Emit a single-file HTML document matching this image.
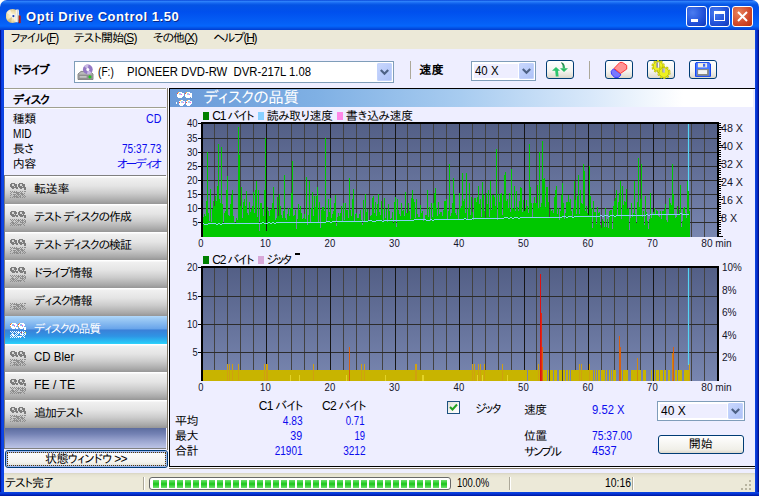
<!DOCTYPE html>
<html lang="ja"><head><meta charset="utf-8"><title>Opti Drive Control 1.50</title>
<style>
*{box-sizing:border-box;margin:0;padding:0}
html,body{width:759px;height:496px;overflow:hidden;background:#fff}
body{font-family:"Liberation Sans","IPAPGothic","IPAGothic",sans-serif;font-size:12px;color:#000;position:relative;line-height:1}
#win div,#win svg{position:absolute}
#win{position:absolute;left:0;top:0;width:759px;height:496px;overflow:hidden;background:#fff}
.bl{left:0;top:24px;width:4px;height:472px;background:linear-gradient(90deg,#00138c 0,#00138c 1px,#0831d9 1px,#0c46e6 2.5px,#0a40e0 4px)}
.br{left:755px;top:24px;width:4px;height:472px;background:linear-gradient(90deg,#0c48e4 0,#0835d2 1.5px,#0424b8 2.8px,#00138c 3px,#00138c 4px)}
.bb{left:0;top:492px;width:759px;height:4px;background:linear-gradient(180deg,#0a48e2 0,#0838d8 1.5px,#0024b8 3px,#00159a 4px)}
.t{white-space:nowrap;line-height:14px;height:14px}
.b{font-weight:bold}
.blue{color:#0c0cee}
#title{left:0;top:0;width:759px;height:30px;border-radius:7px 7px 0 0;
 background:linear-gradient(180deg,#0a48d8 0,#2c80fa 1.5px,#1668f0 3px,#0453e4 5px,#0050ee 12px,#0560f6 23px,#0566fc 26px,#0452e4 28px,#003cd0 30px)}
#menu{left:4px;top:30px;width:751px;height:19px;background:#ece9d8}
#body{left:4px;top:49px;width:751px;height:424px;background:#eeeeff}
#status{left:4px;top:473px;width:751px;height:19px;background:linear-gradient(180deg,#d8d4c2 0,#e6e3d2 2px,#ece9d8 5px,#ece9d8 100%)}
.combo{background:#fff;border:1px solid #7f9db9}
.dd{width:15px;height:18px;border-radius:2px;background:linear-gradient(135deg,#cad8fd,#b9cbfa 55%,#adc0f6);box-shadow:inset 0 0 0 1px #c2d2fc}
.tb{height:19px;width:28px;border:1px solid #003c74;border-radius:3px;background:linear-gradient(180deg,#fff 0%,#f4f3ee 60%,#dcd8cc 100%)}
.nb{left:4px;width:163px;height:28px;background:linear-gradient(180deg,#fff 0,#fff 1px,#f0f0f0 2px,#e4e4e4 36%,#cccccc 62%,#aaaaaa 88%,#969696 100%)}
.nb.sel{background:linear-gradient(180deg,#b4dafc 0,#a2cef6 2px,#68a4ea 46%,#3a80d8 50%,#2f94e4 72%,#28c4f6 94%,#30d4fc 100%)}
.nb .t{left:29px;top:6px;font-size:12px}
.nb.sel .t{color:#fff}
.ic{left:6px;top:7px;width:16px;height:15px}
</style></head><body>
<div id="win">
<div class="bl"></div><div class="br"></div><div class="bb"></div>
<div id="title">
 <svg style="left:6px;top:7.5px" width="16" height="16" viewBox="0 0 16 16"><defs><radialGradient id="cdg" cx="0.45" cy="0.5" r="0.55"><stop offset="0" stop-color="#fffbe8"></stop><stop offset="0.55" stop-color="#f2e4b4"></stop><stop offset="1" stop-color="#d8c488"></stop></radialGradient></defs><circle cx="6.6" cy="8" r="6.9" fill="url(#cdg)"></circle><path d="M6.6 8L0.4 5A6.9 6.9 0 0 1 4.2 1.5ZM6.6 8L12.8 11A6.9 6.9 0 0 1 9 14.5Z" fill="#fff" opacity="0.55"></path><path d="M6.6 8L1.2 12.4A6.9 6.9 0 0 0 5 14.7Z" fill="#c0a868" opacity="0.5"></path><circle cx="7.4" cy="8.1" r="2.1" fill="#f4f4f4"></circle><circle cx="7.4" cy="8.1" r="1.1" fill="#1840b0"></circle><path d="M9.6 2.4L10.4 1.6H12.4L13 2.6V4.2L12.6 14.2H9.9Z" fill="#f4f2ec"></path><path d="M11.8 1.8V14.2" stroke="#c8c4bc" stroke-width="0.8"></path><rect x="12.6" y="7.4" width="0.6" height="7.8" fill="#401010"></rect><rect x="13" y="7.6" width="1.7" height="7.5" fill="#b81818"></rect></svg>
 <div class="t b" style="left: 26px; top: 9.5px; font-size: 13px; color: rgb(255, 255, 255); letter-spacing: 0.54px; text-shadow: rgb(10, 42, 138) 1px 1px 0px; right: auto;">Opti Drive Control 1.50</div>
 <div style="left:686px;top:6px;width:21px;height:21px;border:1px solid #fff;border-radius:3px;background:radial-gradient(circle at 30% 30%,#4a7cf0,#2050d8 60%,#1038b8)"><div style="left:4px;top:12px;width:7px;height:3px;background:#fff"></div></div>
 <div style="left:709px;top:6px;width:21px;height:21px;border:1px solid #fff;border-radius:3px;background:radial-gradient(circle at 30% 30%,#4a7cf0,#2050d8 60%,#1038b8)"><div style="left:4px;top:4px;width:11px;height:10px;border:1px solid #fff;border-top-width:3px"></div></div>
 <div style="left:732px;top:6px;width:21px;height:21px;border:1px solid #fff;border-radius:3px;background:radial-gradient(circle at 30% 30%,#e8835c,#d0482a 60%,#b83010)"><svg style="left:0;top:0" width="19" height="19"><path d="M5 5L14 14M14 5L5 14" stroke="#fff" stroke-width="2"></path></svg></div>
</div>
<div id="menu">
 <div class="t" style="left: 6.7px; top: 1px; letter-spacing: -1.01px; right: auto;">ファイル(<u>F</u>)</div>
 <div class="t" style="left: 69.6px; top: 1px; letter-spacing: -0.92px; right: auto;">テスト開始(<u>S</u>)</div>
 <div class="t" style="left: 149px; top: 1px; letter-spacing: -1.04px; right: auto;">その他(<u>X</u>)</div>
 <div class="t" style="left: 209.4px; top: 1px; letter-spacing: -1.38px; right: auto;">ヘルプ(<u>H</u>)</div>
</div>
<div id="body">
 <!-- toolbar -->
 <div class="t b" style="left: 9px; top: 14px; letter-spacing: -0.71px; right: auto;">ドライブ</div>
 <div class="combo" style="left:70px;top:12px;width:320px;height:22px">
  <svg style="left:2px;top:1.5px" width="17" height="17" viewBox="0 0 17 17"><path d="M1 10L4 7.4H13L16 10V15.5H1Z" fill="#b8b8b8" stroke="#707070" stroke-width="0.8"></path><rect x="1.4" y="10.6" width="14.2" height="4.6" fill="#909090"></rect><rect x="2.6" y="12.2" width="7" height="1.4" fill="#d0d0d0"></rect><circle cx="10.8" cy="5.4" r="4.9" fill="#9478c4"></circle><path d="M10.8 5.4L7 2.3A4.9 4.9 0 0 1 11.6 0.6ZM10.8 5.4L14.6 8.5A4.9 4.9 0 0 1 10 10.2Z" fill="#c8b8e4"></path><circle cx="10.8" cy="5.4" r="1.5" fill="#fff"></circle><rect x="11.6" y="11.6" width="2.6" height="2.6" fill="#20c820" transform="rotate(45 12.9 12.9)"></rect></svg><div class="t" style="left: 22.5px; top: 3px; letter-spacing: 0px; right: auto; transform-origin: 0px 50%; transform: scaleX(0.847);">(F:)</div><div class="t" style="left: 51.5px; top: 3px; letter-spacing: 0px; right: auto; transform-origin: 0px 50%; transform: scaleX(0.942);">PIONEER DVD-RW&nbsp; DVR-217L 1.08</div>
  <div class="dd" style="right:1px;top:1px"><svg style="left:3px;top:6px" width="9" height="7"><path d="M0.8 1L4.5 4.7L8.2 1" stroke="#4d6185" stroke-width="2.2" fill="none"></path></svg></div>
 </div>
 <div style="left:406px;top:12px;width:1px;height:18px;background:#aca899"></div>
 <div class="t b" style="left: 415.3px; top: 14px; letter-spacing: 0.33px; right: auto;">速度</div>
 <div class="combo" style="left:467px;top:12px;width:65px;height:20px">
  <div style="left:2px;top:2px;width:44px;height:14px;background:#eeeeff"></div>
  <div class="t" style="left: 3px; top: 1.5px; letter-spacing: 0px; right: auto; transform-origin: 0px 50%; transform: scaleX(0.952);">40 X</div>
  <div class="dd" style="right:1px;top:1px;height:16px"><svg style="left:3px;top:5px" width="9" height="7"><path d="M0.8 1L4.5 4.7L8.2 1" stroke="#4d6185" stroke-width="2.2" fill="none"></path></svg></div>
 </div>
 <div class="tb" style="left:542px;top:11px"><svg style="left:-1px;top:-1px" width="28" height="19" viewBox="0 0 28 19"><defs><linearGradient id="ga" x1="0" y1="0" x2="0" y2="1"><stop offset="0" stop-color="#16703a"></stop><stop offset="1" stop-color="#38c070"></stop></linearGradient></defs><path d="M10 7L6 10.8H9.2L9.8 16.6H12.6L12 10.8H14Z" fill="#2cc46c"></path><path d="M14 8.2H22L18 11.9Z" fill="#2abc64"></path><path d="M14.8 2.3Q18.6 2.4 19.2 8.4H16.8Q16.8 4.2 14.8 2.3Z" fill="url(#ga)"></path></svg></div>
 <div style="left:585px;top:12px;width:1px;height:18px;background:#aca899"></div>
 <div class="tb" style="left:601px;top:11px"><svg style="left:-1px;top:-1px" width="28" height="19" viewBox="0 0 28 19"><path d="M8.4 8.9L6.2 11.3L6.5 14L9.6 17.4H13.5L15.7 15L15.4 13.5Z" fill="#7878ff" stroke="#3838ff" stroke-width="1"></path><path d="M9.1 8.4L14.9 2.4H17.4L21.7 5.3V9.1L15.4 13.5Z" fill="#ff9494" stroke="#ff3434" stroke-width="1"></path></svg></div>
 <div class="tb" style="left:643px;top:11px"><svg style="left:-1px;top:-1px" width="28" height="19" viewBox="0 0 28 19"><circle cx="11.1" cy="6.3" r="5.7" fill="none" stroke="#a8ac00" stroke-width="1.8" stroke-dasharray="2 1.58"></circle><circle cx="11.1" cy="6.3" r="5" fill="#eef020" stroke="#989c00" stroke-width="0.7"></circle><circle cx="11.1" cy="6.3" r="5.6" fill="none" stroke="#e4e818" stroke-width="1.2" stroke-dasharray="2 1.52" stroke-dashoffset="-0.2"></circle><circle cx="16.9" cy="12.5" r="5.7" fill="none" stroke="#a8ac00" stroke-width="1.8" stroke-dasharray="2 1.58"></circle><circle cx="16.9" cy="12.5" r="5" fill="#eef020" stroke="#989c00" stroke-width="0.7"></circle><circle cx="16.9" cy="12.5" r="5.6" fill="none" stroke="#e4e818" stroke-width="1.2" stroke-dasharray="2 1.52" stroke-dashoffset="-0.2"></circle><rect x="9.4" y="2.4" width="3.1" height="5.3" fill="#8c8ca8"></rect><rect x="10.9" y="2.4" width="1.1" height="5.3" fill="#f4f4f8"></rect><rect x="15.4" y="8.4" width="2.5" height="4.1" fill="#8c8ca8"></rect><rect x="16.6" y="8.4" width="0.9" height="4.1" fill="#f4f4f8"></rect></svg></div>
 <div class="tb" style="left:685px;top:11px"><svg style="left:-1px;top:-1px" width="28" height="19" viewBox="0 0 28 19"><path d="M7 2.6H20L21.5 4V16.4H6.5V3.1Z" fill="#4878ff" stroke="#1848f0" stroke-width="1"></path><rect x="8.9" y="3.1" width="9.2" height="4.3" fill="#f2eee2"></rect><rect x="14" y="3.8" width="2.2" height="2.9" fill="#3868f8"></rect><rect x="8.2" y="9.1" width="11.6" height="6.6" fill="#8a8a80"></rect><rect x="9.1" y="10.1" width="9" height="3.9" fill="#f4f4f4"></rect></svg></div>
 <!-- left panel -->
 <div style="left:0;top:39px;width:162px;height:1px;background:#a0a090"></div><div style="left:0;top:40px;width:162px;height:1px;background:#fcfcff"></div>
 <div style="left:0;top:58px;width:162px;height:1px;background:#a0a090"></div><div style="left:0;top:59px;width:162px;height:1px;background:#fcfcff"></div>
 
 <div class="t b" style="left: 9px; top: 44px; letter-spacing: -0.89px; right: auto;">ディスク</div>
 <div class="t" style="left: 8.7px; top: 63px; letter-spacing: -0.33px; right: auto;">種類</div>
 <div class="t" style="left: 9px; top: 78px; letter-spacing: 0px; right: auto; transform-origin: 0px 50%; transform: scaleX(0.841);">MID</div>
 <div class="t" style="left: 8.7px; top: 93px; letter-spacing: -0.7px; right: auto;">長さ</div>
 <div class="t" style="left: 8.7px; top: 108px; letter-spacing: -0.33px; right: auto;">内容</div>
 <div class="t blue" style="right: auto; top: 63px; letter-spacing: 0px; left: 141.7px; transform-origin: 0px 50%; transform: scaleX(0.882);">CD</div>
 <div class="t blue" style="right: auto; top: 93px; letter-spacing: 0px; left: 117.7px; transform-origin: 0px 50%; transform: scaleX(0.841);">75:37.73</div>
 <div class="t blue" style="right: auto; top: 108px; letter-spacing: -1.69px; left: 113px;">オーディオ</div>
</div>
<div style="left:4px;top:175px;width:162px;height:1px;background:#808080"></div><div style="left:4px;top:175px;width:1px;height:274px;background:#7c7c80;z-index:3"></div>
<div class="nb" style="top:176px"><svg class="ic" width="16" height="15" viewBox="0 0 16 15" shape-rendering="crispEdges"><path d="M1 0h4v1h-4zM9 0h4v1h-4zM0 1h7v1h-7zM8 1h7v1h-7zM0 2h7v1h-7zM8 2h7v1h-7zM0 3h7v1h-7zM8 3h7v1h-7zM1 4h5v1h-5zM9 4h5v1h-5zM2 5h2v1h-2zM10 5h2v1h-2zM6 4h2v2h-2zM14 4h2v3h-2z" fill="#7c7c7c"></path><path d="M2 1h2v2h-2zM10 1h2v2h-2zM4 3h1v1h-1zM12 3h1v1h-1z" fill="#d8d8d8"></path><path d="M0 8h1v1h-1zM2 8h1v1h-1zM4 8h1v1h-1zM6 8h1v1h-1zM10 8h1v1h-1zM12 8h1v1h-1zM14 8h1v1h-1zM15 8h1v1h-1zM1 9h1v1h-1zM3 9h1v1h-1zM4 9h1v1h-1zM5 9h1v1h-1zM6 9h1v1h-1zM7 9h1v1h-1zM8 9h1v1h-1zM9 9h1v1h-1zM11 9h1v1h-1zM0 10h1v1h-1zM6 10h1v1h-1zM7 10h1v1h-1zM8 10h1v1h-1zM10 10h1v1h-1zM11 10h1v1h-1zM12 10h1v1h-1zM14 10h1v1h-1zM1 11h1v1h-1zM3 11h1v1h-1zM4 11h1v1h-1zM5 11h1v1h-1zM7 11h1v1h-1zM8 11h1v1h-1zM9 11h1v1h-1zM11 11h1v1h-1zM12 11h1v1h-1zM13 11h1v1h-1zM0 12h1v1h-1zM4 12h1v1h-1zM6 12h1v1h-1zM8 12h1v1h-1zM10 12h1v1h-1zM12 12h1v1h-1zM14 12h1v1h-1zM3 13h1v1h-1zM4 13h1v1h-1zM5 13h1v1h-1zM6 13h1v1h-1zM7 13h1v1h-1zM9 13h1v1h-1zM10 13h1v1h-1zM13 13h1v1h-1zM15 13h1v1h-1zM0 14h1v1h-1zM2 14h1v1h-1zM4 14h1v1h-1zM6 14h1v1h-1zM7 14h1v1h-1zM8 14h1v1h-1zM10 14h1v1h-1zM12 14h1v1h-1zM14 14h1v1h-1z" fill="#8e8e8e"></path></svg><div class="t" style="letter-spacing: -0.28px; right: auto; left: 30px;">転送率</div></div>
<div class="nb" style="top:204px"><svg class="ic" width="16" height="15" viewBox="0 0 16 15" shape-rendering="crispEdges"><path d="M1 0h5v1h-5zM9 0h5v1h-5zM0 1h7v1h-7zM8 1h7v1h-7zM0 2h7v1h-7zM8 2h7v1h-7zM0 3h6v1h-6zM8 3h6v1h-6zM1 4h5v1h-5zM9 4h5v1h-5zM2 5h3v1h-3zM10 5h3v1h-3zM6 4h2v2h-2zM14 4h2v3h-2z" fill="#7c7c7c"></path><path d="M2 1h2v2h-2zM10 1h2v2h-2zM4 3h1v1h-1zM12 3h1v1h-1z" fill="#d8d8d8"></path><path d="M0 8h1v1h-1zM2 8h1v1h-1zM4 8h1v1h-1zM6 8h1v1h-1zM8 8h1v1h-1zM10 8h1v1h-1zM12 8h1v1h-1zM14 8h1v1h-1zM1 9h1v1h-1zM3 9h1v1h-1zM5 9h1v1h-1zM7 9h1v1h-1zM8 9h1v1h-1zM9 9h1v1h-1zM11 9h1v1h-1zM12 9h1v1h-1zM13 9h1v1h-1zM15 9h1v1h-1zM2 10h1v1h-1zM6 10h1v1h-1zM8 10h1v1h-1zM10 10h1v1h-1zM12 10h1v1h-1zM14 10h1v1h-1zM15 10h1v1h-1zM1 11h1v1h-1zM2 11h1v1h-1zM3 11h1v1h-1zM5 11h1v1h-1zM7 11h1v1h-1zM10 11h1v1h-1zM11 11h1v1h-1zM12 11h1v1h-1zM13 11h1v1h-1zM15 11h1v1h-1zM0 12h1v1h-1zM2 12h1v1h-1zM3 12h1v1h-1zM4 12h1v1h-1zM6 12h1v1h-1zM12 12h1v1h-1zM14 12h1v1h-1zM1 13h1v1h-1zM3 13h1v1h-1zM5 13h1v1h-1zM7 13h1v1h-1zM8 13h1v1h-1zM9 13h1v1h-1zM10 13h1v1h-1zM11 13h1v1h-1zM13 13h1v1h-1zM0 14h1v1h-1zM2 14h1v1h-1zM4 14h1v1h-1zM6 14h1v1h-1zM8 14h1v1h-1zM10 14h1v1h-1zM14 14h1v1h-1z" fill="#8e8e8e"></path></svg><div class="t" style="letter-spacing: -1.09px; right: auto; left: 30px;">テスト ディスクの作成</div></div>
<div class="nb" style="top:232px"><svg class="ic" width="16" height="15" viewBox="0 0 16 15" shape-rendering="crispEdges"><path d="M1 0h4v1h-4zM9 0h4v1h-4zM0 1h7v1h-7zM8 1h7v1h-7zM0 2h7v1h-7zM8 2h7v1h-7zM0 3h7v1h-7zM8 3h7v1h-7zM1 4h5v1h-5zM9 4h5v1h-5zM2 5h2v1h-2zM10 5h2v1h-2zM6 4h2v2h-2zM14 4h2v3h-2z" fill="#7c7c7c"></path><path d="M2 1h2v2h-2zM10 1h2v2h-2zM4 3h1v1h-1zM12 3h1v1h-1z" fill="#d8d8d8"></path><path d="M0 8h1v1h-1zM2 8h1v1h-1zM4 8h1v1h-1zM6 8h1v1h-1zM10 8h1v1h-1zM12 8h1v1h-1zM14 8h1v1h-1zM15 8h1v1h-1zM1 9h1v1h-1zM3 9h1v1h-1zM4 9h1v1h-1zM5 9h1v1h-1zM6 9h1v1h-1zM7 9h1v1h-1zM8 9h1v1h-1zM9 9h1v1h-1zM11 9h1v1h-1zM0 10h1v1h-1zM6 10h1v1h-1zM7 10h1v1h-1zM8 10h1v1h-1zM10 10h1v1h-1zM11 10h1v1h-1zM12 10h1v1h-1zM14 10h1v1h-1zM1 11h1v1h-1zM3 11h1v1h-1zM4 11h1v1h-1zM5 11h1v1h-1zM7 11h1v1h-1zM8 11h1v1h-1zM9 11h1v1h-1zM11 11h1v1h-1zM12 11h1v1h-1zM13 11h1v1h-1zM0 12h1v1h-1zM4 12h1v1h-1zM6 12h1v1h-1zM8 12h1v1h-1zM10 12h1v1h-1zM12 12h1v1h-1zM14 12h1v1h-1zM3 13h1v1h-1zM4 13h1v1h-1zM5 13h1v1h-1zM6 13h1v1h-1zM7 13h1v1h-1zM9 13h1v1h-1zM10 13h1v1h-1zM13 13h1v1h-1zM15 13h1v1h-1zM0 14h1v1h-1zM2 14h1v1h-1zM4 14h1v1h-1zM6 14h1v1h-1zM7 14h1v1h-1zM8 14h1v1h-1zM10 14h1v1h-1zM12 14h1v1h-1zM14 14h1v1h-1z" fill="#8e8e8e"></path></svg><div class="t" style="letter-spacing: -1.09px; right: auto; left: 30px;">テスト ディスクの検証</div></div>
<div class="nb" style="top:260px"><svg class="ic" width="16" height="15" viewBox="0 0 16 15" shape-rendering="crispEdges"><path d="M1 0h5v1h-5zM9 0h5v1h-5zM0 1h7v1h-7zM8 1h7v1h-7zM0 2h7v1h-7zM8 2h7v1h-7zM0 3h6v1h-6zM8 3h6v1h-6zM1 4h5v1h-5zM9 4h5v1h-5zM2 5h3v1h-3zM10 5h3v1h-3zM6 4h2v2h-2zM14 4h2v3h-2z" fill="#7c7c7c"></path><path d="M2 1h2v2h-2zM10 1h2v2h-2zM4 3h1v1h-1zM12 3h1v1h-1z" fill="#d8d8d8"></path><path d="M0 8h1v1h-1zM2 8h1v1h-1zM4 8h1v1h-1zM6 8h1v1h-1zM8 8h1v1h-1zM10 8h1v1h-1zM12 8h1v1h-1zM14 8h1v1h-1zM1 9h1v1h-1zM3 9h1v1h-1zM5 9h1v1h-1zM7 9h1v1h-1zM8 9h1v1h-1zM9 9h1v1h-1zM11 9h1v1h-1zM12 9h1v1h-1zM13 9h1v1h-1zM15 9h1v1h-1zM2 10h1v1h-1zM6 10h1v1h-1zM8 10h1v1h-1zM10 10h1v1h-1zM12 10h1v1h-1zM14 10h1v1h-1zM15 10h1v1h-1zM1 11h1v1h-1zM2 11h1v1h-1zM3 11h1v1h-1zM5 11h1v1h-1zM7 11h1v1h-1zM10 11h1v1h-1zM11 11h1v1h-1zM12 11h1v1h-1zM13 11h1v1h-1zM15 11h1v1h-1zM0 12h1v1h-1zM2 12h1v1h-1zM3 12h1v1h-1zM4 12h1v1h-1zM6 12h1v1h-1zM12 12h1v1h-1zM14 12h1v1h-1zM1 13h1v1h-1zM3 13h1v1h-1zM5 13h1v1h-1zM7 13h1v1h-1zM8 13h1v1h-1zM9 13h1v1h-1zM10 13h1v1h-1zM11 13h1v1h-1zM13 13h1v1h-1zM0 14h1v1h-1zM2 14h1v1h-1zM4 14h1v1h-1zM6 14h1v1h-1zM8 14h1v1h-1zM10 14h1v1h-1zM14 14h1v1h-1z" fill="#8e8e8e"></path></svg><div class="t" style="letter-spacing: -0.87px; right: auto; left: 30px;">ドライブ情報</div></div>
<div class="nb" style="top:288px"><svg class="ic" width="16" height="15" viewBox="0 0 16 15" shape-rendering="crispEdges"><path d="M0 8h1v1h-1zM2 8h1v1h-1zM4 8h1v1h-1zM6 8h1v1h-1zM10 8h1v1h-1zM12 8h1v1h-1zM14 8h1v1h-1zM15 8h1v1h-1zM1 9h1v1h-1zM3 9h1v1h-1zM4 9h1v1h-1zM5 9h1v1h-1zM6 9h1v1h-1zM7 9h1v1h-1zM8 9h1v1h-1zM9 9h1v1h-1zM11 9h1v1h-1zM0 10h1v1h-1zM6 10h1v1h-1zM7 10h1v1h-1zM8 10h1v1h-1zM10 10h1v1h-1zM11 10h1v1h-1zM12 10h1v1h-1zM14 10h1v1h-1zM1 11h1v1h-1zM3 11h1v1h-1zM4 11h1v1h-1zM5 11h1v1h-1zM7 11h1v1h-1zM8 11h1v1h-1zM9 11h1v1h-1zM11 11h1v1h-1zM12 11h1v1h-1zM13 11h1v1h-1zM0 12h1v1h-1zM4 12h1v1h-1zM6 12h1v1h-1zM8 12h1v1h-1zM10 12h1v1h-1zM12 12h1v1h-1zM14 12h1v1h-1zM3 13h1v1h-1zM4 13h1v1h-1zM5 13h1v1h-1zM6 13h1v1h-1zM7 13h1v1h-1zM9 13h1v1h-1zM10 13h1v1h-1zM13 13h1v1h-1zM15 13h1v1h-1zM0 14h1v1h-1zM2 14h1v1h-1zM4 14h1v1h-1zM6 14h1v1h-1zM7 14h1v1h-1zM8 14h1v1h-1zM10 14h1v1h-1zM12 14h1v1h-1zM14 14h1v1h-1z" fill="#8e8e8e"></path></svg><div class="t" style="letter-spacing: -1.02px; right: auto; left: 30px;">ディスク情報</div></div>
<div class="nb sel" style="top:316px"><svg class="ic" width="16" height="15" viewBox="0 0 16 15" shape-rendering="crispEdges"><path d="M1 0h5v1h-5zM9 0h5v1h-5zM0 1h7v1h-7zM8 1h7v1h-7zM0 2h7v1h-7zM8 2h7v1h-7zM0 3h6v1h-6zM8 3h6v1h-6zM1 4h5v1h-5zM9 4h5v1h-5zM2 5h3v1h-3zM10 5h3v1h-3zM6 4h2v2h-2zM14 4h2v3h-2z" fill="#ffffff"></path><path d="M2 1h2v2h-2zM10 1h2v2h-2zM4 3h1v1h-1zM12 3h1v1h-1z" fill="#8cc0f0"></path><path d="M0 1h1v1h-1zM8 1h1v1h-1z" fill="#ff4030"></path><path d="M4 2h1v1h-1zM12 2h1v1h-1z" fill="#ff50e0"></path><path d="M1 0h1v1h-1zM9 0h1v1h-1zM0 3h1v1h-1zM8 3h1v1h-1z" fill="#ffb030"></path><path d="M0 8h1v1h-1zM2 8h1v1h-1zM4 8h1v1h-1zM6 8h1v1h-1zM8 8h1v1h-1zM10 8h1v1h-1zM12 8h1v1h-1zM14 8h1v1h-1zM1 9h1v1h-1zM3 9h1v1h-1zM5 9h1v1h-1zM7 9h1v1h-1zM8 9h1v1h-1zM9 9h1v1h-1zM11 9h1v1h-1zM12 9h1v1h-1zM13 9h1v1h-1zM15 9h1v1h-1zM2 10h1v1h-1zM6 10h1v1h-1zM8 10h1v1h-1zM10 10h1v1h-1zM12 10h1v1h-1zM14 10h1v1h-1zM15 10h1v1h-1zM1 11h1v1h-1zM2 11h1v1h-1zM3 11h1v1h-1zM5 11h1v1h-1zM7 11h1v1h-1zM10 11h1v1h-1zM11 11h1v1h-1zM12 11h1v1h-1zM13 11h1v1h-1zM15 11h1v1h-1zM0 12h1v1h-1zM2 12h1v1h-1zM3 12h1v1h-1zM4 12h1v1h-1zM6 12h1v1h-1zM12 12h1v1h-1zM14 12h1v1h-1zM1 13h1v1h-1zM3 13h1v1h-1zM5 13h1v1h-1zM7 13h1v1h-1zM8 13h1v1h-1zM9 13h1v1h-1zM10 13h1v1h-1zM11 13h1v1h-1zM13 13h1v1h-1zM0 14h1v1h-1zM2 14h1v1h-1zM4 14h1v1h-1zM6 14h1v1h-1zM8 14h1v1h-1zM10 14h1v1h-1zM14 14h1v1h-1z" fill="#f0f8ff"></path><path d="M11 9h1v1h-1z" fill="#ff4030"></path><path d="M15 9h1v1h-1z" fill="#f0f020"></path></svg><div class="t" style="letter-spacing: -1.35px; right: auto; left: 30px;">ディスクの品質</div></div>
<div class="nb" style="top:344px"><svg class="ic" width="16" height="15" viewBox="0 0 16 15" shape-rendering="crispEdges"><path d="M1 0h4v1h-4zM9 0h4v1h-4zM0 1h7v1h-7zM8 1h7v1h-7zM0 2h7v1h-7zM8 2h7v1h-7zM0 3h7v1h-7zM8 3h7v1h-7zM1 4h5v1h-5zM9 4h5v1h-5zM2 5h2v1h-2zM10 5h2v1h-2zM6 4h2v2h-2zM14 4h2v3h-2z" fill="#7c7c7c"></path><path d="M2 1h2v2h-2zM10 1h2v2h-2zM4 3h1v1h-1zM12 3h1v1h-1z" fill="#d8d8d8"></path><path d="M0 8h1v1h-1zM2 8h1v1h-1zM4 8h1v1h-1zM6 8h1v1h-1zM10 8h1v1h-1zM12 8h1v1h-1zM14 8h1v1h-1zM15 8h1v1h-1zM1 9h1v1h-1zM3 9h1v1h-1zM4 9h1v1h-1zM5 9h1v1h-1zM6 9h1v1h-1zM7 9h1v1h-1zM8 9h1v1h-1zM9 9h1v1h-1zM11 9h1v1h-1zM0 10h1v1h-1zM6 10h1v1h-1zM7 10h1v1h-1zM8 10h1v1h-1zM10 10h1v1h-1zM11 10h1v1h-1zM12 10h1v1h-1zM14 10h1v1h-1zM1 11h1v1h-1zM3 11h1v1h-1zM4 11h1v1h-1zM5 11h1v1h-1zM7 11h1v1h-1zM8 11h1v1h-1zM9 11h1v1h-1zM11 11h1v1h-1zM12 11h1v1h-1zM13 11h1v1h-1zM0 12h1v1h-1zM4 12h1v1h-1zM6 12h1v1h-1zM8 12h1v1h-1zM10 12h1v1h-1zM12 12h1v1h-1zM14 12h1v1h-1zM3 13h1v1h-1zM4 13h1v1h-1zM5 13h1v1h-1zM6 13h1v1h-1zM7 13h1v1h-1zM9 13h1v1h-1zM10 13h1v1h-1zM13 13h1v1h-1zM15 13h1v1h-1zM0 14h1v1h-1zM2 14h1v1h-1zM4 14h1v1h-1zM6 14h1v1h-1zM7 14h1v1h-1zM8 14h1v1h-1zM10 14h1v1h-1zM12 14h1v1h-1zM14 14h1v1h-1z" fill="#8e8e8e"></path></svg><div class="t" style="letter-spacing: 0px; right: auto; left: 30px; transform-origin: 0px 50%; transform: scaleX(0.957);">CD Bler</div></div>
<div class="nb" style="top:372px"><svg class="ic" width="16" height="15" viewBox="0 0 16 15" shape-rendering="crispEdges"><path d="M1 0h5v1h-5zM9 0h5v1h-5zM0 1h7v1h-7zM8 1h7v1h-7zM0 2h7v1h-7zM8 2h7v1h-7zM0 3h6v1h-6zM8 3h6v1h-6zM1 4h5v1h-5zM9 4h5v1h-5zM2 5h3v1h-3zM10 5h3v1h-3zM6 4h2v2h-2zM14 4h2v3h-2z" fill="#7c7c7c"></path><path d="M2 1h2v2h-2zM10 1h2v2h-2zM4 3h1v1h-1zM12 3h1v1h-1z" fill="#d8d8d8"></path><path d="M0 8h1v1h-1zM2 8h1v1h-1zM4 8h1v1h-1zM6 8h1v1h-1zM8 8h1v1h-1zM10 8h1v1h-1zM12 8h1v1h-1zM14 8h1v1h-1zM1 9h1v1h-1zM3 9h1v1h-1zM5 9h1v1h-1zM7 9h1v1h-1zM8 9h1v1h-1zM9 9h1v1h-1zM11 9h1v1h-1zM12 9h1v1h-1zM13 9h1v1h-1zM15 9h1v1h-1zM2 10h1v1h-1zM6 10h1v1h-1zM8 10h1v1h-1zM10 10h1v1h-1zM12 10h1v1h-1zM14 10h1v1h-1zM15 10h1v1h-1zM1 11h1v1h-1zM2 11h1v1h-1zM3 11h1v1h-1zM5 11h1v1h-1zM7 11h1v1h-1zM10 11h1v1h-1zM11 11h1v1h-1zM12 11h1v1h-1zM13 11h1v1h-1zM15 11h1v1h-1zM0 12h1v1h-1zM2 12h1v1h-1zM3 12h1v1h-1zM4 12h1v1h-1zM6 12h1v1h-1zM12 12h1v1h-1zM14 12h1v1h-1zM1 13h1v1h-1zM3 13h1v1h-1zM5 13h1v1h-1zM7 13h1v1h-1zM8 13h1v1h-1zM9 13h1v1h-1zM10 13h1v1h-1zM11 13h1v1h-1zM13 13h1v1h-1zM0 14h1v1h-1zM2 14h1v1h-1zM4 14h1v1h-1zM6 14h1v1h-1zM8 14h1v1h-1zM10 14h1v1h-1zM14 14h1v1h-1z" fill="#8e8e8e"></path></svg><div class="t" style="letter-spacing: 0px; right: auto; left: 30px; transform-origin: 0px 50%; transform: scaleX(1.014);">FE / TE</div></div>
<div class="nb" style="top:400px"><svg class="ic" width="16" height="15" viewBox="0 0 16 15" shape-rendering="crispEdges"><path d="M1 0h4v1h-4zM9 0h4v1h-4zM0 1h7v1h-7zM8 1h7v1h-7zM0 2h7v1h-7zM8 2h7v1h-7zM0 3h7v1h-7zM8 3h7v1h-7zM1 4h5v1h-5zM9 4h5v1h-5zM2 5h2v1h-2zM10 5h2v1h-2zM6 4h2v2h-2zM14 4h2v3h-2z" fill="#7c7c7c"></path><path d="M2 1h2v2h-2zM10 1h2v2h-2zM4 3h1v1h-1zM12 3h1v1h-1z" fill="#d8d8d8"></path><path d="M0 8h1v1h-1zM2 8h1v1h-1zM4 8h1v1h-1zM6 8h1v1h-1zM10 8h1v1h-1zM12 8h1v1h-1zM14 8h1v1h-1zM15 8h1v1h-1zM1 9h1v1h-1zM3 9h1v1h-1zM4 9h1v1h-1zM5 9h1v1h-1zM6 9h1v1h-1zM7 9h1v1h-1zM8 9h1v1h-1zM9 9h1v1h-1zM11 9h1v1h-1zM0 10h1v1h-1zM6 10h1v1h-1zM7 10h1v1h-1zM8 10h1v1h-1zM10 10h1v1h-1zM11 10h1v1h-1zM12 10h1v1h-1zM14 10h1v1h-1zM1 11h1v1h-1zM3 11h1v1h-1zM4 11h1v1h-1zM5 11h1v1h-1zM7 11h1v1h-1zM8 11h1v1h-1zM9 11h1v1h-1zM11 11h1v1h-1zM12 11h1v1h-1zM13 11h1v1h-1zM0 12h1v1h-1zM4 12h1v1h-1zM6 12h1v1h-1zM8 12h1v1h-1zM10 12h1v1h-1zM12 12h1v1h-1zM14 12h1v1h-1zM3 13h1v1h-1zM4 13h1v1h-1zM5 13h1v1h-1zM6 13h1v1h-1zM7 13h1v1h-1zM9 13h1v1h-1zM10 13h1v1h-1zM13 13h1v1h-1zM15 13h1v1h-1zM0 14h1v1h-1zM2 14h1v1h-1zM4 14h1v1h-1zM6 14h1v1h-1zM7 14h1v1h-1zM8 14h1v1h-1zM10 14h1v1h-1zM12 14h1v1h-1zM14 14h1v1h-1z" fill="#8e8e8e"></path></svg><div class="t" style="letter-spacing: -1.17px; right: auto; left: 30px;">追加テスト</div></div>
<div style="left:4px;top:428px;width:162px;height:20px;background:linear-gradient(180deg,#5c6c9e 0%,#7482b4 30%,#9ca6d0 65%,#bcc4e6 100%)"></div>
<div style="left:4px;top:448px;width:162px;height:1px;background:#808080"></div>
<div style="left:5px;top:450px;width:163px;height:18px;border:1px solid #003c74;border-radius:3px;background:linear-gradient(180deg,#fff,#f4f3ee 70%,#e0dccf);box-shadow:inset 0 0 0 2px #a4bcf0"><div style="left:1px;top:1px;width:159px;height:14px;border:1px dotted #5a3c00"></div><div class="t" style="left: -0.5px; top: 1px; width: 161px; text-align: center; font-size: 12px; letter-spacing: -0.62px; right: auto;">状態ウィンドウ &gt;&gt;</div></div>
<div style="left:167px;top:88px;width:1px;height:362px;background:#807868"></div><div style="left:168px;top:88px;width:1px;height:380px;background:#fcfcff"></div><div style="left:169px;top:88px;width:586px;height:379px;background:#000"></div><div style="left:169px;top:467px;width:586px;height:1px;background:#fcfcff"></div><div style="left:169px;top:468px;width:586px;height:1px;background:#807868"></div>
<div style="left:170px;top:89px;width:585px;height:377px;background:#eeeeff"></div>
<div style="left:170px;top:89px;width:583px;height:18px;background:linear-gradient(90deg,#6a9ad8 0%,#7fb0e4 25%,#a8ccf0 50%,#d8e8fa 72%,#fff 88%)"></div>
<svg style="left:176px;top:91px" width="17" height="16" viewBox="0 0 17 16" shape-rendering="crispEdges"><path d="M2 1h4v1h-4zM1 2h7v1h-7zM1 3h7v1h-7zM1 4h7v1h-7zM1 5h6v1h-6zM2 6h4v1h-4zM10 1h4v1h-4zM9 2h7v1h-7zM9 3h7v1h-7zM9 4h7v1h-7zM9 5h6v1h-6zM10 6h4v1h-4zM4 9h3v1h-3zM3 10h6v1h-6zM3 11h6v1h-6zM3 12h6v1h-6zM3 13h5v1h-5zM4 14h3v1h-3zM11 9h3v1h-3zM10 10h6v1h-6zM10 11h6v1h-6zM10 12h6v1h-6zM10 13h5v1h-5zM11 14h3v1h-3zM15 4h1v3h-1zM0 11h1v2h-1z" fill="#ffffff"></path><path d="M3 2h2v2h-2zM11 2h2v2h-2zM5 10h2v2h-2zM12 10h2v2h-2z" fill="#a8d0f4"></path><path d="M1 2h1v1h-1zM9 2h1v1h-1zM3 11h1v1h-1zM10 11h1v1h-1z" fill="#ff5040"></path><path d="M5 3h1v1h-1zM13 3h1v1h-1zM7 11h1v1h-1zM14 11h1v1h-1z" fill="#ff60e0"></path><path d="M2 1h1v1h-1zM10 1h1v1h-1zM4 9h1v1h-1zM11 9h1v1h-1z" fill="#ffc040"></path></svg><div class="t" style="left: 203.4px; top: 89px; font-size: 16px; line-height: 18px; height: 18px; color: rgb(255, 255, 255); letter-spacing: -0.73px; right: auto;">ディスクの品質</div>
<div style="left:203px;top:112px;width:6px;height:8px;background:#008000"></div><div class="t" style="left: 212.2px; top: 109px; letter-spacing: -1.14px; right: auto;">C1 バイト</div>
<div style="left:258px;top:112px;width:6px;height:8px;background:#88d0ff"></div><div class="t" style="left: 266.7px; top: 109px; letter-spacing: -0.43px; right: auto;">読み取り速度</div>
<div style="left:337px;top:112px;width:6px;height:8px;background:#ff88e8"></div><div class="t" style="left: 345.8px; top: 109px; letter-spacing: -0.35px; right: auto;">書き込み速度</div>
<div style="left:203px;top:256px;width:6px;height:8px;background:#008000"></div><div class="t" style="left: 212.2px; top: 253px; letter-spacing: -1.14px; right: auto;">C2 バイト</div>
<div style="left:258px;top:256px;width:6px;height:8px;background:#d8a8d8"></div><div class="t" style="left: 266.7px; top: 253px; letter-spacing: -1.86px; right: auto;">ジッタ</div>
<div style="left:295px;top:253px;width:5px;height:2px;background:#000"></div>
<div class="t" style="left: 258.8px; top: 399px; letter-spacing: -0.71px; right: auto;">C1 バイト</div>
<div class="t" style="left: 322px; top: 399px; letter-spacing: -0.69px; right: auto;">C2 バイト</div>
<div class="t" style="left: 175px; top: 414px; letter-spacing: -0.47px; right: auto;">平均</div>
<div class="t blue" style="left: 249.7px; width: 62px; text-align: right; top: 414px; letter-spacing: 0px; right: auto; transform-origin: 0px 50%; transform: scaleX(0.848);">4.83</div>
<div class="t blue" style="left: 312.1px; width: 65px; text-align: right; top: 414px; letter-spacing: 0px; right: auto; transform-origin: 0px 50%; transform: scaleX(0.809);">0.71</div>
<div class="t" style="left: 175px; top: 429px; letter-spacing: -0.47px; right: auto;">最大</div>
<div class="t blue" style="left: 247.1px; width: 62px; text-align: right; top: 429px; letter-spacing: 0px; right: auto; transform-origin: 0px 50%; transform: scaleX(0.891);">39</div>
<div class="t blue" style="left: 313.9px; width: 65px; text-align: right; top: 429px; letter-spacing: 0px; right: auto; transform-origin: 0px 50%; transform: scaleX(0.786);">19</div>
<div class="t" style="left: 175px; top: 444px; letter-spacing: -0.47px; right: auto;">合計</div>
<div class="t blue" style="left: 250.8px; width: 62px; text-align: right; top: 444px; letter-spacing: 0px; right: auto; transform-origin: 0px 50%; transform: scaleX(0.83);">21901</div>
<div class="t blue" style="left: 310.5px; width: 65px; text-align: right; top: 444px; letter-spacing: 0px; right: auto; transform-origin: 0px 50%; transform: scaleX(0.839);">3212</div>
<div style="left:447px;top:401px;width:13px;height:13px;border:1px solid #1c5180;background:linear-gradient(135deg,#dcdcd4,#f4f4f0 50%,#fff)"><svg style="left:1px;top:1px" width="9" height="9"><path d="M1 4L3.5 6.5L8 1.5" stroke="#21a121" stroke-width="2" fill="none"></path></svg></div>
<div class="t" style="left: 475.5px; top: 402px; letter-spacing: -1.58px; right: auto;">ジッタ</div>
<div class="t" style="left: 524px; top: 403px; letter-spacing: -0.67px; right: auto;">速度</div>
<div class="t blue" style="left: 591.7px; top: 403px; letter-spacing: 0px; right: auto; transform-origin: 0px 50%; transform: scaleX(0.937);">9.52 X</div>
<div class="t" style="left: 524px; top: 429px; letter-spacing: -0.67px; right: auto;">位置</div>
<div class="t blue" style="left: 591.7px; top: 429px; letter-spacing: 0px; right: auto; transform-origin: 0px 50%; transform: scaleX(0.854);">75:37.00</div>
<div class="t" style="left: 524px; top: 445px; letter-spacing: -2.19px; right: auto;">サンプル</div>
<div class="t blue" style="left: 591.7px; top: 444px; letter-spacing: 0px; right: auto; transform-origin: 0px 50%; transform: scaleX(0.925);">4537</div>
<div class="combo" style="left:657px;top:401px;width:88px;height:20px"><div style="left:2px;top:2px;width:67px;height:14px;background:#eeeeff"></div><div class="t" style="left: 3px; top: 1.5px; letter-spacing: 0px; right: auto; transform-origin: 0px 50%; transform: scaleX(1.001);">40 X</div><div class="dd" style="right:1px;top:1px;height:16px"><svg style="left:3px;top:5px" width="9" height="7"><path d="M0.8 1L4.5 4.7L8.2 1" stroke="#4d6185" stroke-width="2.2" fill="none"></path></svg></div></div>
<div style="left:658px;top:435px;width:86px;height:19px;border:1px solid #003c74;border-radius:3px;background:linear-gradient(180deg,#fff,#f0efe8 80%,#dcd8cc)"><div class="t" style="left: -0.3px; top: 1px; width: 84px; text-align: center; letter-spacing: -0.13px; right: auto;">開始</div></div>
<svg id="charts" style="left:0;top:0" width="759" height="496" viewBox="0 0 759 496">
<defs><linearGradient id="pg" x1="0" y1="0" x2="0" y2="1"><stop offset="0" stop-color="#535f86"></stop><stop offset="1" stop-color="#7886b0"></stop></linearGradient></defs>
<rect x="203" y="124.0" width="515" height="113.0" fill="url(#pg)"></rect>
<path d="M214.5 124.0V237.0M227.5 124.0V237.0M240.5 124.0V237.0M253.5 124.0V237.0M278.5 124.0V237.0M291.5 124.0V237.0M304.5 124.0V237.0M317.5 124.0V237.0M343.5 124.0V237.0M356.5 124.0V237.0M369.5 124.0V237.0M382.5 124.0V237.0M407.5 124.0V237.0M420.5 124.0V237.0M433.5 124.0V237.0M446.5 124.0V237.0M472.5 124.0V237.0M485.5 124.0V237.0M498.5 124.0V237.0M511.5 124.0V237.0M536.5 124.0V237.0M549.5 124.0V237.0M562.5 124.0V237.0M575.5 124.0V237.0M601.5 124.0V237.0M614.5 124.0V237.0M627.5 124.0V237.0M640.5 124.0V237.0M665.5 124.0V237.0M678.5 124.0V237.0M691.5 124.0V237.0M704.5 124.0V237.0" stroke="#424242" stroke-width="1" shape-rendering="crispEdges"></path>
<path d="M203 222.5H718M203 208.5H718M203 194.5H718M203 180.5H718M203 166.5H718M203 152.5H718M203 138.5H718" stroke="#2c2c2c" stroke-width="1" shape-rendering="crispEdges"></path>
<path d="M266.5 124.0V237.0M330.5 124.0V237.0M395.5 124.0V237.0M459.5 124.0V237.0M524.5 124.0V237.0M588.5 124.0V237.0M653.5 124.0V237.0" stroke="#161616" stroke-width="1" shape-rendering="crispEdges"></path>
<rect x="203" y="268.0" width="515" height="113.0" fill="url(#pg)"></rect>
<path d="M214.5 268.0V381.0M227.5 268.0V381.0M240.5 268.0V381.0M253.5 268.0V381.0M278.5 268.0V381.0M291.5 268.0V381.0M304.5 268.0V381.0M317.5 268.0V381.0M343.5 268.0V381.0M356.5 268.0V381.0M369.5 268.0V381.0M382.5 268.0V381.0M407.5 268.0V381.0M420.5 268.0V381.0M433.5 268.0V381.0M446.5 268.0V381.0M472.5 268.0V381.0M485.5 268.0V381.0M498.5 268.0V381.0M511.5 268.0V381.0M536.5 268.0V381.0M549.5 268.0V381.0M562.5 268.0V381.0M575.5 268.0V381.0M601.5 268.0V381.0M614.5 268.0V381.0M627.5 268.0V381.0M640.5 268.0V381.0M665.5 268.0V381.0M678.5 268.0V381.0M691.5 268.0V381.0M704.5 268.0V381.0" stroke="#424242" stroke-width="1" shape-rendering="crispEdges"></path>
<path d="M203 352.5H718M203 324.5H718M203 296.5H718" stroke="#2c2c2c" stroke-width="1" shape-rendering="crispEdges"></path>
<path d="M266.5 268.0V381.0M330.5 268.0V381.0M395.5 268.0V381.0M459.5 268.0V381.0M524.5 268.0V381.0M588.5 268.0V381.0M653.5 268.0V381.0" stroke="#161616" stroke-width="1" shape-rendering="crispEdges"></path>
<path d="M203.5 237V217.2M204.5 237V214.1M205.5 237V215.5M206.5 237V201.3M207.5 237V152.2M208.5 237V213.1M209.5 237V220.9M210.5 237V188.8M211.5 237V221.8M212.5 237V208.8M213.5 237V200.8M214.5 237V206.4M215.5 237V196.4M216.5 237V200.5M217.5 237V186.0M218.5 237V143.8M219.5 237V199.4M220.5 237V202.6M221.5 237V147.1M222.5 237V203.9M223.5 237V223.2M224.5 237V212.5M225.5 237V210.5M226.5 237V189.6M227.5 237V175.8M228.5 237V214.6M229.5 237V216.4M230.5 237V203.7M231.5 237V194.8M232.5 237V189.6M233.5 237V215.6M234.5 237V222.4M235.5 237V222.9M236.5 237V217.7M237.5 237V220.2M238.5 237V126.8M239.5 237V155.1M240.5 237V205.5M241.5 237V186.6M242.5 237V218.4M243.5 237V201.8M244.5 237V198.8M245.5 237V205.8M246.5 237V190.8M247.5 237V212.5M248.5 237V214.6M249.5 237V201.8M250.5 237V212.0M251.5 237V208.8M252.5 237V206.2M253.5 237V191.5M254.5 237V213.2M255.5 237V189.5M256.5 237V180.8M257.5 237V217.1M258.5 237V189.9M259.5 237V230.5M260.5 237V202.9M261.5 237V202.6M262.5 237V209.0M263.5 237V216.0M264.5 237V190.3M265.5 237V138.1M266.5 237V230.8M267.5 237V207.4M268.5 237V211.3M269.5 237V215.7M270.5 237V209.7M271.5 237V208.6M272.5 237V202.5M273.5 237V187.1M274.5 237V209.1M275.5 237V220.2M276.5 237V217.9M277.5 237V196.5M278.5 237V216.2M279.5 237V193.8M280.5 237V205.7M281.5 237V214.8M282.5 237V218.0M283.5 237V211.4M284.5 237V175.3M285.5 237V218.1M286.5 237V220.3M287.5 237V214.3M288.5 237V208.3M289.5 237V215.7M290.5 237V208.1M291.5 237V193.1M292.5 237V160.7M293.5 237V215.8M294.5 237V214.9M295.5 237V210.3M296.5 237V229.2M297.5 237V218.9M298.5 237V204.0M299.5 237V209.9M300.5 237V205.5M301.5 237V212.5M302.5 237V218.7M303.5 237V218.0M304.5 237V213.6M305.5 237V219.3M306.5 237V177.3M307.5 237V225.4M308.5 237V214.7M309.5 237V180.5M310.5 237V221.6M311.5 237V207.7M312.5 237V192.0M313.5 237V215.8M314.5 237V196.4M315.5 237V206.7M316.5 237V196.3M317.5 237V186.8M318.5 237V221.9M319.5 237V201.7M320.5 237V228.4M321.5 237V209.7M322.5 237V207.0M323.5 237V207.1M324.5 237V210.7M325.5 237V138.1M326.5 237V221.6M327.5 237V217.4M328.5 237V198.9M329.5 237V212.0M330.5 237V197.6M331.5 237V217.5M332.5 237V214.1M333.5 237V211.3M334.5 237V203.4M335.5 237V195.2M336.5 237V225.9M337.5 237V216.9M338.5 237V213.2M339.5 237V216.3M340.5 237V213.3M341.5 237V206.3M342.5 237V221.9M343.5 237V202.5M344.5 237V219.9M345.5 237V203.3M346.5 237V210.0M347.5 237V210.4M348.5 237V218.1M349.5 237V177.7M350.5 237V210.4M351.5 237V216.2M352.5 237V199.1M353.5 237V189.4M354.5 237V221.0M355.5 237V213.7M356.5 237V213.3M357.5 237V217.8M358.5 237V217.7M359.5 237V214.2M360.5 237V209.6M361.5 237V220.1M362.5 237V225.3M363.5 237V200.2M364.5 237V221.6M365.5 237V194.1M366.5 237V212.0M367.5 237V208.6M368.5 237V221.0M369.5 237V220.5M370.5 237V215.5M371.5 237V215.3M372.5 237V197.8M373.5 237V195.8M374.5 237V213.3M375.5 237V201.5M376.5 237V215.6M377.5 237V204.0M378.5 237V193.8M379.5 237V211.8M380.5 237V214.5M381.5 237V200.6M382.5 237V209.3M383.5 237V221.1M384.5 237V198.4M385.5 237V217.7M386.5 237V209.1M387.5 237V221.9M388.5 237V203.8M389.5 237V211.3M390.5 237V219.4M391.5 237V218.2M392.5 237V211.9M393.5 237V222.6M394.5 237V201.7M395.5 237V196.8M396.5 237V227.3M397.5 237V198.9M398.5 237V209.9M399.5 237V214.1M400.5 237V216.2M401.5 237V203.4M402.5 237V211.1M403.5 237V210.1M404.5 237V216.2M405.5 237V192.1M406.5 237V212.5M407.5 237V212.9M408.5 237V202.9M409.5 237V211.3M410.5 237V219.2M411.5 237V197.7M412.5 237V189.7M413.5 237V198.5M414.5 237V201.5M415.5 237V218.0M416.5 237V198.7M417.5 237V213.9M418.5 237V216.9M419.5 237V217.2M420.5 237V204.6M421.5 237V213.0M422.5 237V210.9M423.5 237V220.8M424.5 237V219.9M425.5 237V215.0M426.5 237V214.8M427.5 237V190.4M428.5 237V216.6M429.5 237V207.1M430.5 237V221.1M431.5 237V203.0M432.5 237V216.5M433.5 237V203.1M434.5 237V193.2M435.5 237V188.1M436.5 237V207.7M437.5 237V216.3M438.5 237V201.8M439.5 237V213.6M440.5 237V212.1M441.5 237V212.0M442.5 237V216.0M443.5 237V210.1M444.5 237V200.5M445.5 237V201.1M446.5 237V199.1M447.5 237V220.2M448.5 237V210.7M449.5 237V163.6M450.5 237V216.2M451.5 237V212.5M452.5 237V202.5M453.5 237V178.0M454.5 237V194.3M455.5 237V212.9M456.5 237V215.2M457.5 237V209.0M458.5 237V220.0M459.5 237V192.6M460.5 237V207.6M461.5 237V205.8M462.5 237V173.4M463.5 237V200.8M464.5 237V199.4M465.5 237V213.4M466.5 237V172.6M467.5 237V219.9M468.5 237V207.5M469.5 237V183.3M470.5 237V214.7M471.5 237V197.2M472.5 237V212.3M473.5 237V219.7M474.5 237V198.4M475.5 237V198.4M476.5 237V202.0M477.5 237V196.6M478.5 237V186.2M479.5 237V204.1M480.5 237V198.8M481.5 237V216.5M482.5 237V182.2M483.5 237V195.2M484.5 237V210.7M485.5 237V218.3M486.5 237V193.4M487.5 237V204.2M488.5 237V190.4M489.5 237V216.5M490.5 237V180.6M491.5 237V210.1M492.5 237V194.5M493.5 237V194.5M494.5 237V196.8M495.5 237V206.4M496.5 237V149.4M497.5 237V219.8M498.5 237V193.7M499.5 237V201.8M500.5 237V194.2M501.5 237V193.0M502.5 237V215.4M503.5 237V195.1M504.5 237V174.8M505.5 237V172.0M506.5 237V201.0M507.5 237V198.8M508.5 237V208.3M509.5 237V193.3M510.5 237V212.0M511.5 237V169.2M512.5 237V207.6M513.5 237V209.2M514.5 237V185.9M515.5 237V211.0M516.5 237V190.8M517.5 237V206.8M518.5 237V211.4M519.5 237V200.6M520.5 237V186.7M521.5 237V188.0M522.5 237V211.5M523.5 237V200.1M524.5 237V210.5M525.5 237V209.2M526.5 237V200.2M527.5 237V206.3M528.5 237V212.6M529.5 237V143.8M530.5 237V186.9M531.5 237V203.0M532.5 237V216.8M533.5 237V203.1M534.5 237V196.8M535.5 237V203.2M536.5 237V202.6M537.5 237V185.1M538.5 237V208.1M539.5 237V152.2M540.5 237V206.5M541.5 237V202.7M542.5 237V140.9M543.5 237V178.8M544.5 237V177.7M545.5 237V206.5M546.5 237V186.5M547.5 237V187.2M548.5 237V202.0M549.5 237V217.9M550.5 237V208.6M551.5 237V210.5M552.5 237V210.1M553.5 237V213.1M554.5 237V197.4M555.5 237V190.3M556.5 237V186.2M557.5 237V214.0M558.5 237V208.4M559.5 237V219.7M560.5 237V211.3M561.5 237V195.3M562.5 237V183.3M563.5 237V202.9M564.5 237V219.0M565.5 237V212.6M566.5 237V201.5M567.5 237V202.4M568.5 237V194.5M569.5 237V202.3M570.5 237V198.9M571.5 237V211.2M572.5 237V216.5M573.5 237V207.6M574.5 237V180.5M575.5 237V199.5M576.5 237V213.9M577.5 237V196.2M578.5 237V175.3M579.5 237V213.6M580.5 237V189.7M581.5 237V202.9M582.5 237V204.2M583.5 237V163.6M584.5 237V171.4M585.5 237V211.2M586.5 237V205.6M587.5 237V212.5M588.5 237V215.3M589.5 237V166.4M590.5 237V196.2M591.5 237V207.6M592.5 237V227.7M593.5 237V201.1M594.5 237V212.4M595.5 237V211.5M596.5 237V224.2M597.5 237V207.3M598.5 237V213.3M599.5 237V211.9M600.5 237V224.7M601.5 237V228.4M602.5 237V219.3M603.5 237V220.7M604.5 237V227.3M605.5 237V207.5M606.5 237V226.5M607.5 237V219.1M608.5 237V227.9M609.5 237V210.5M610.5 237V210.1M611.5 237V210.0M612.5 237V228.6M613.5 237V206.2M614.5 237V201.4M615.5 237V197.6M616.5 237V190.0M617.5 237V215.1M618.5 237V201.7M619.5 237V193.1M620.5 237V180.5M621.5 237V219.4M622.5 237V186.2M623.5 237V204.6M624.5 237V201.1M625.5 237V202.0M626.5 237V188.8M627.5 237V209.0M628.5 237V207.5M629.5 237V230.0M630.5 237V217.9M631.5 237V203.0M632.5 237V216.7M633.5 237V212.9M634.5 237V181.4M635.5 237V214.3M636.5 237V222.5M637.5 237V202.4M638.5 237V157.9M639.5 237V207.2M640.5 237V199.4M641.5 237V164.1M642.5 237V216.9M643.5 237V211.3M644.5 237V225.1M645.5 237V196.4M646.5 237V211.7M647.5 237V220.5M648.5 237V229.3M649.5 237V218.8M650.5 237V193.0M651.5 237V218.0M652.5 237V215.0M653.5 237V211.7M654.5 237V208.2M655.5 237V213.6M656.5 237V210.1M657.5 237V210.7M658.5 237V216.3M659.5 237V216.9M660.5 237V211.0M661.5 237V219.1M662.5 237V211.3M663.5 237V210.9M664.5 237V208.7M665.5 237V203.7M666.5 237V219.7M667.5 237V222.4M668.5 237V214.1M669.5 237V198.0M670.5 237V203.2M671.5 237V204.6M672.5 237V163.6M673.5 237V193.5M674.5 237V213.5M675.5 237V218.1M676.5 237V217.1M677.5 237V206.4M678.5 237V215.3M679.5 237V209.9M680.5 237V185.2M681.5 237V226.9M682.5 237V221.0M683.5 237V207.5M684.5 237V207.0M685.5 237V213.1M686.5 237V218.3M687.5 237V180.5M688.5 237V189.9M689.5 237V210.5" stroke="#00c800" stroke-width="1" fill="none" shape-rendering="crispEdges"></path>
<polyline points="203,223.5 205,224.5 207,224.5 209,223.5 211,223.5 213,223.5 215,223.5 217,224.5 219,223.5 221,224.5 223,223.5 225,223.5 227,223.5 229,223.5 231,223.5 233,223.5 235,223.5 237,223.5 239,223.5 241,223.5 243,223.5 245,223.5 247,223.5 249,223.5 251,223.5 253,223.5 255,223.5 257,223.5 259,223.5 261,223.5 263,222.5 265,223.5 267,223.5 269,222.5 271,223.5 273,222.5 275,223.5 277,222.5 279,222.5 281,222.5 283,222.5 285,222.5 287,222.5 289,222.5 291,222.5 293,222.5 295,222.5 297,222.5 299,222.5 301,222.5 303,222.5 305,222.5 307,222.5 309,222.5 311,222.5 313,222.5 315,222.5 317,222.5 319,222.5 321,222.5 323,222.5 325,222.5 327,221.5 329,221.5 331,222.5 333,221.5 335,221.5 337,221.5 339,221.5 341,221.5 343,221.5 345,221.5 347,221.5 349,221.5 351,221.5 353,221.5 355,221.5 357,221.5 359,221.5 361,221.5 363,221.5 365,221.5 367,221.5 369,220.5 371,220.5 373,221.5 375,221.5 377,220.5 379,220.5 381,220.5 383,221.5 385,220.5 387,220.5 389,220.5 391,220.5 393,220.5 395,220.5 397,220.5 399,220.5 401,220.5 403,220.5 405,220.5 407,220.5 409,220.5 411,220.5 413,220.5 415,219.5 417,219.5 419,219.5 421,219.5 423,219.5 425,219.5 427,220.5 429,220.5 431,219.5 433,220.5 435,219.5 437,219.5 439,219.5 441,219.5 443,219.5 445,219.5 447,219.5 449,219.5 451,219.5 453,219.5 455,219.5 457,219.5 459,219.5 461,219.5 463,219.5 465,218.5 467,219.5 469,219.5 471,219.5 473,218.5 475,218.5 477,218.5 479,218.5 481,218.5 483,218.5 485,218.5 487,218.5 489,218.5 491,218.5 493,218.5 495,218.5 497,218.5 499,218.5 501,218.5 503,218.5 505,217.5 507,217.5 509,218.5 511,217.5 513,218.5 515,217.5 517,217.5 519,218.5 521,217.5 523,217.5 525,217.5 527,217.5 529,217.5 531,217.5 533,217.5 535,217.5 537,217.5 539,217.5 541,217.5 543,217.5 545,217.5 547,217.5 549,217.5 551,217.5 553,217.5 555,217.5 557,217.5 559,217.5 561,217.5 563,216.5 565,216.5 567,217.5 569,216.5 571,216.5 573,217.5 575,216.5 577,216.5 579,216.5 581,216.5 583,216.5 585,216.5 587,216.5 589,216.5 591,216.5 593,216.5 595,216.5 597,216.5 599,216.5 601,215.5 603,216.5 605,215.5 607,215.5 609,216.5 611,215.5 613,215.5 615,216.5 617,215.5 619,215.5 621,215.5 623,215.5 625,215.5 627,215.5 629,215.5 631,215.5 633,215.5 635,215.5 637,215.5 639,215.5 641,215.5 643,215.5 645,215.5 647,214.5 649,215.5 651,214.5 653,214.5 655,214.5 657,214.5 659,214.5 661,214.5 663,214.5 665,214.5 667,214.5 669,214.5 671,214.5 673,214.5 675,214.5 677,214.5 679,214.5 681,213.5 683,214.5 685,214.5 687,214.5 689,214.5" fill="none" stroke="#84d2f2" stroke-width="1" shape-rendering="crispEdges"></polyline>
<path d="M203.5 381V370.0M204.5 381V370.0M205.5 381V370.0M206.5 381V370.0M207.5 381V370.0M208.5 381V370.0M209.5 381V370.0M210.5 381V370.0M211.5 381V370.0M212.5 381V370.0M213.5 381V370.0M214.5 381V370.0M215.5 381V370.0M216.5 381V370.0M217.5 381V370.0M218.5 381V370.0M219.5 381V370.0M220.5 381V370.0M221.5 381V370.0M222.5 381V370.0M223.5 381V370.0M224.5 381V370.0M225.5 381V370.0M226.5 381V370.0M228.5 381V370.0M230.5 381V370.0M231.5 381V370.0M233.5 381V370.0M234.5 381V370.0M235.5 381V370.0M236.5 381V370.0M237.5 381V370.0M239.5 381V370.0M240.5 381V370.0M241.5 381V370.0M242.5 381V370.0M243.5 381V370.0M244.5 381V370.0M245.5 381V370.0M246.5 381V370.0M247.5 381V370.0M248.5 381V370.0M249.5 381V370.0M250.5 381V370.0M251.5 381V370.0M252.5 381V370.0M253.5 381V370.0M254.5 381V370.0M255.5 381V370.0M256.5 381V370.0M257.5 381V370.0M258.5 381V370.0M259.5 381V370.0M260.5 381V370.0M261.5 381V370.0M262.5 381V370.0M263.5 381V370.0M265.5 381V370.0M268.5 381V370.0M269.5 381V370.0M270.5 381V370.0M271.5 381V370.0M272.5 381V370.0M273.5 381V370.0M274.5 381V370.0M275.5 381V370.0M276.5 381V370.0M277.5 381V370.0M278.5 381V370.0M279.5 381V370.0M280.5 381V370.0M281.5 381V370.0M282.5 381V370.0M283.5 381V370.0M284.5 381V370.0M285.5 381V370.0M286.5 381V370.0M287.5 381V370.0M288.5 381V370.0M289.5 381V370.0M290.5 381V370.0M291.5 381V370.0M292.5 381V370.0M293.5 381V370.0M294.5 381V370.0M295.5 381V370.0M296.5 381V370.0M297.5 381V370.0M298.5 381V370.0M299.5 381V370.0M300.5 381V370.0M301.5 381V370.0M302.5 381V370.0M303.5 381V370.0M304.5 381V370.0M305.5 381V370.0M306.5 381V370.0M307.5 381V370.0M308.5 381V370.0M309.5 381V370.0M310.5 381V370.0M311.5 381V370.0M312.5 381V370.0M314.5 381V370.0M315.5 381V370.0M316.5 381V370.0M317.5 381V370.0M318.5 381V370.0M319.5 381V370.0M320.5 381V370.0M321.5 381V370.0M322.5 381V370.0M323.5 381V370.0M324.5 381V370.0M325.5 381V370.0M326.5 381V370.0M327.5 381V370.0M328.5 381V370.0M329.5 381V370.0M330.5 381V370.0M331.5 381V370.0M332.5 381V370.0M333.5 381V370.0M334.5 381V370.0M335.5 381V370.0M336.5 381V370.0M337.5 381V370.0M338.5 381V370.0M339.5 381V370.0M340.5 381V370.0M341.5 381V370.0M342.5 381V370.0M343.5 381V370.0M344.5 381V370.0M345.5 381V370.0M346.5 381V370.0M347.5 381V370.0M348.5 381V370.0M350.5 381V370.0M351.5 381V370.0M352.5 381V370.0M353.5 381V370.0M354.5 381V370.0M355.5 381V370.0M356.5 381V370.0M357.5 381V370.0M358.5 381V370.0M359.5 381V370.0M360.5 381V370.0M362.5 381V370.0M363.5 381V370.0M365.5 381V370.0M366.5 381V370.0M367.5 381V370.0M368.5 381V370.0M369.5 381V370.0M370.5 381V370.0M371.5 381V370.0M372.5 381V370.0M373.5 381V370.0M374.5 381V370.0M375.5 381V370.0M376.5 381V370.0M377.5 381V370.0M378.5 381V370.0M379.5 381V370.0M380.5 381V370.0M381.5 381V370.0M382.5 381V370.0M383.5 381V370.0M384.5 381V370.0M385.5 381V370.0M386.5 381V370.0M387.5 381V370.0M388.5 381V370.0M389.5 381V370.0M390.5 381V370.0M391.5 381V370.0M392.5 381V370.0M393.5 381V370.0M394.5 381V370.0M395.5 381V370.0M396.5 381V370.0M397.5 381V370.0M398.5 381V370.0M399.5 381V370.0M400.5 381V370.0M401.5 381V370.0M402.5 381V370.0M403.5 381V370.0M404.5 381V370.0M405.5 381V370.0M406.5 381V370.0M407.5 381V370.0M408.5 381V370.0M409.5 381V370.0M410.5 381V370.0M411.5 381V370.0M412.5 381V370.0M413.5 381V370.0M414.5 381V370.0M417.5 381V370.0M418.5 381V370.0M419.5 381V370.0M420.5 381V370.0M421.5 381V370.0M422.5 381V370.0M423.5 381V370.0M424.5 381V370.0M425.5 381V370.0M426.5 381V370.0M427.5 381V370.0M428.5 381V370.0M429.5 381V370.0M430.5 381V370.0M431.5 381V370.0M432.5 381V370.0M433.5 381V370.0M434.5 381V370.0M435.5 381V370.0M436.5 381V370.0M437.5 381V370.0M438.5 381V370.0M439.5 381V370.0M440.5 381V370.0M441.5 381V370.0M442.5 381V370.0M443.5 381V370.0M444.5 381V370.0M445.5 381V370.0M446.5 381V370.0M447.5 381V370.0M448.5 381V370.0M449.5 381V370.0M450.5 381V370.0M451.5 381V370.0M452.5 381V370.0M453.5 381V370.0M454.5 381V370.0M455.5 381V370.0M456.5 381V370.0M457.5 381V370.0M458.5 381V370.0M459.5 381V370.0M460.5 381V370.0M461.5 381V370.0M462.5 381V370.0M463.5 381V370.0M464.5 381V370.0M465.5 381V370.0M466.5 381V370.0M467.5 381V370.0M468.5 381V370.0M469.5 381V370.0M470.5 381V370.0M471.5 381V370.0M473.5 381V370.0M475.5 381V370.0M476.5 381V370.0M477.5 381V370.0M479.5 381V370.0M481.5 381V370.0M482.5 381V370.0M483.5 381V370.0M485.5 381V370.0M486.5 381V370.0M487.5 381V370.0M488.5 381V370.0M489.5 381V370.0M490.5 381V370.0M491.5 381V370.0M492.5 381V370.0M493.5 381V370.0M494.5 381V370.0M495.5 381V370.0M496.5 381V370.0M497.5 381V370.0M498.5 381V370.0M499.5 381V370.0M500.5 381V370.0M501.5 381V370.0M503.5 381V370.0M504.5 381V370.0M505.5 381V370.0M506.5 381V370.0M507.5 381V370.0M508.5 381V370.0M509.5 381V370.0M510.5 381V370.0M511.5 381V370.0M512.5 381V370.0M513.5 381V370.0M514.5 381V370.0M515.5 381V370.0M516.5 381V370.0M517.5 381V370.0M518.5 381V370.0M519.5 381V370.0M520.5 381V370.0M521.5 381V370.0M522.5 381V370.0M523.5 381V370.0M524.5 381V370.0M525.5 381V370.0M526.5 381V370.0M528.5 381V370.0M529.5 381V370.0M530.5 381V370.0M531.5 381V370.0M532.5 381V370.0M533.5 381V370.0M534.5 381V370.0M535.5 381V370.0M536.5 381V370.0M537.5 381V370.0M539.5 381V370.0M543.5 381V370.0M544.5 381V370.0M545.5 381V370.0M546.5 381V370.0M548.5 381V370.0M550.5 381V370.0M551.5 381V370.0M552.5 381V370.0M554.5 381V370.0M555.5 381V370.0M556.5 381V370.0M559.5 381V370.0M560.5 381V370.0M561.5 381V370.0M563.5 381V370.0M564.5 381V370.0M566.5 381V370.0M567.5 381V370.0M569.5 381V370.0M571.5 381V370.0M572.5 381V370.0M573.5 381V370.0M574.5 381V370.0M575.5 381V370.0M576.5 381V370.0M577.5 381V370.0M578.5 381V370.0M580.5 381V370.0M582.5 381V370.0M583.5 381V370.0M584.5 381V370.0M585.5 381V370.0M586.5 381V370.0M587.5 381V370.0M588.5 381V370.0M590.5 381V370.0M591.5 381V370.0M592.5 381V370.0M594.5 381V370.0M596.5 381V370.0M598.5 381V370.0M599.5 381V370.0M601.5 381V370.0M602.5 381V370.0M603.5 381V370.0M604.5 381V370.0M606.5 381V370.0M609.5 381V370.0M611.5 381V370.0M613.5 381V370.0M614.5 381V370.0M615.5 381V370.0M621.5 381V370.0M623.5 381V370.0M624.5 381V370.0M625.5 381V370.0M626.5 381V370.0M627.5 381V370.0M631.5 381V370.0M632.5 381V370.0M633.5 381V370.0M634.5 381V370.0M635.5 381V370.0M636.5 381V370.0M638.5 381V370.0M639.5 381V370.0M640.5 381V370.0M643.5 381V370.0M644.5 381V370.0M645.5 381V370.0M651.5 381V370.0M654.5 381V370.0M656.5 381V370.0M657.5 381V370.0M658.5 381V370.0M660.5 381V370.0M661.5 381V370.0M662.5 381V370.0M664.5 381V370.0M665.5 381V370.0M668.5 381V370.0M669.5 381V370.0M675.5 381V370.0M676.5 381V370.0M678.5 381V370.0M679.5 381V370.0M680.5 381V370.0M681.5 381V370.0M684.5 381V370.0M685.5 381V370.0M686.5 381V370.0M687.5 381V370.0M688.5 381V370.0" stroke="#c8b400" stroke-width="1" fill="none" shape-rendering="crispEdges"></path>
<path d="M227.5 381V364.1M229.5 381V364.1M232.5 381V364.1M238.5 381V364.1M264.5 381V364.1M266.5 381V364.1M267.5 381V364.1M313.5 381V364.1M361.5 381V364.1M364.5 381V364.1M415.5 381V364.1M416.5 381V364.1M472.5 381V364.1M474.5 381V364.1M478.5 381V364.1M480.5 381V364.1M484.5 381V364.1M502.5 381V364.1M538.5 381V364.1M579.5 381V364.1M581.5 381V364.1M589.5 381V364.1M689.5 381V364.1" stroke="#d0a010" stroke-width="1" fill="none" shape-rendering="crispEdges"></path>
<path d="M349.5 381V347.1M542.5 381V347.1M619.5 381V335.8M620.5 381V347.1M673.5 381V347.1" stroke="#d86010" stroke-width="1" fill="none" shape-rendering="crispEdges"></path>
<path d="M540.5 381V273.6" stroke="#e01010" stroke-width="1" fill="none" shape-rendering="crispEdges"></path>
<path d="M541.5 381V313.2" stroke="#e02810" stroke-width="1" fill="none" shape-rendering="crispEdges"></path>
<path d="M637.5 381V358.4M672.5 381V352.8" stroke="#d08810" stroke-width="1" fill="none" shape-rendering="crispEdges"></path>
<path d="M290.5 381v-6M299.5 381v-6M346.5 381v-6M385.5 381v-6M422.5 381v-6M423.5 381v-6M477.5 381v-6M482.5 381v-6M507.5 381v-6" stroke="#e4d428" stroke-width="1" shape-rendering="crispEdges"></path>
<path d="M688.5 124.0V191" stroke="#54d4f6" stroke-width="1.15"></path>
<path d="M688.5 268.0V365" stroke="#54d4f6" stroke-width="1.15"></path>
<path d="M202 237.0V123.0H719" stroke="#000" stroke-width="2" fill="none" shape-rendering="crispEdges"></path>
<path d="M718 122.0V237.0" stroke="#000" stroke-width="2" fill="none" shape-rendering="crispEdges"></path>
<path d="M202 381.0V267.0H719" stroke="#000" stroke-width="2" fill="none" shape-rendering="crispEdges"></path>
<path d="M718 266.0V381.0" stroke="#000" stroke-width="2" fill="none" shape-rendering="crispEdges"></path>
<path d="M198 222.5H201" stroke="#000" stroke-width="1" shape-rendering="crispEdges"></path>
<text x="192.4" y="226" textLength="5.2" font-family="Liberation Sans, sans-serif" font-size="11" lengthAdjust="spacingAndGlyphs" fill="#14142a">5</text>
<path d="M198 208.5H201" stroke="#000" stroke-width="1" shape-rendering="crispEdges"></path>
<text x="187.0" y="212" textLength="10.6" font-family="Liberation Sans, sans-serif" font-size="11" lengthAdjust="spacingAndGlyphs" fill="#14142a">10</text>
<path d="M198 194.5H201" stroke="#000" stroke-width="1" shape-rendering="crispEdges"></path>
<text x="187.0" y="198" textLength="10.6" font-family="Liberation Sans, sans-serif" font-size="11" lengthAdjust="spacingAndGlyphs" fill="#14142a">15</text>
<path d="M198 180.5H201" stroke="#000" stroke-width="1" shape-rendering="crispEdges"></path>
<text x="187.0" y="184" textLength="10.6" font-family="Liberation Sans, sans-serif" font-size="11" lengthAdjust="spacingAndGlyphs" fill="#14142a">20</text>
<path d="M198 166.5H201" stroke="#000" stroke-width="1" shape-rendering="crispEdges"></path>
<text x="187.0" y="170" textLength="10.6" font-family="Liberation Sans, sans-serif" font-size="11" lengthAdjust="spacingAndGlyphs" fill="#14142a">25</text>
<path d="M198 152.5H201" stroke="#000" stroke-width="1" shape-rendering="crispEdges"></path>
<text x="187.0" y="156" textLength="10.6" font-family="Liberation Sans, sans-serif" font-size="11" lengthAdjust="spacingAndGlyphs" fill="#14142a">30</text>
<path d="M198 138.5H201" stroke="#000" stroke-width="1" shape-rendering="crispEdges"></path>
<text x="187.0" y="142" textLength="10.6" font-family="Liberation Sans, sans-serif" font-size="11" lengthAdjust="spacingAndGlyphs" fill="#14142a">35</text>
<path d="M198 123.5H201" stroke="#000" stroke-width="1" shape-rendering="crispEdges"></path>
<text x="187.0" y="127.0" textLength="10.6" font-family="Liberation Sans, sans-serif" font-size="11" lengthAdjust="spacingAndGlyphs" fill="#14142a">40</text>
<path d="M198 352.5H201" stroke="#000" stroke-width="1" shape-rendering="crispEdges"></path>
<text x="192.4" y="356" textLength="5.2" font-family="Liberation Sans, sans-serif" font-size="11" lengthAdjust="spacingAndGlyphs" fill="#14142a">5</text>
<path d="M198 324.5H201" stroke="#000" stroke-width="1" shape-rendering="crispEdges"></path>
<text x="187.0" y="328" textLength="10.6" font-family="Liberation Sans, sans-serif" font-size="11" lengthAdjust="spacingAndGlyphs" fill="#14142a">10</text>
<path d="M198 296.5H201" stroke="#000" stroke-width="1" shape-rendering="crispEdges"></path>
<text x="187.0" y="300" textLength="10.6" font-family="Liberation Sans, sans-serif" font-size="11" lengthAdjust="spacingAndGlyphs" fill="#14142a">15</text>
<path d="M198 267.5H201" stroke="#000" stroke-width="1" shape-rendering="crispEdges"></path>
<text x="187.0" y="271.0" textLength="10.6" font-family="Liberation Sans, sans-serif" font-size="11" lengthAdjust="spacingAndGlyphs" fill="#14142a">20</text>
<path d="M719 236.5h4M719 233.5h2M719 231.5h2M719 229.5h2M719 226.5h2M719 224.5h2M719 222.5h2M719 220.5h2M719 217.5h4M719 215.5h2M719 213.5h2M719 211.5h2M719 208.5h2M719 206.5h2M719 204.5h2M719 202.5h2M719 199.5h4M719 197.5h2M719 195.5h2M719 193.5h2M719 190.5h2M719 188.5h2M719 186.5h2M719 184.5h2M719 181.5h4M719 179.5h2M719 177.5h2M719 174.5h2M719 172.5h2M719 170.5h2M719 168.5h2M719 165.5h2M719 163.5h4M719 161.5h2M719 159.5h2M719 156.5h2M719 154.5h2M719 152.5h2M719 150.5h2M719 147.5h2M719 145.5h4M719 143.5h2M719 141.5h2M719 138.5h2M719 136.5h2M719 134.5h2M719 132.5h2M719 129.5h2M719 127.5h4M719 125.5h2M719 123.5h2" stroke="#000" stroke-width="1" shape-rendering="crispEdges"></path>
<text x="721.0" y="222.3" textLength="16" font-family="Liberation Sans, sans-serif" font-size="11" lengthAdjust="spacingAndGlyphs" fill="#14142a">8 X</text>
<text x="721.0" y="204.3" textLength="22" font-family="Liberation Sans, sans-serif" font-size="11" lengthAdjust="spacingAndGlyphs" fill="#14142a">16 X</text>
<text x="721.0" y="186.3" textLength="22" font-family="Liberation Sans, sans-serif" font-size="11" lengthAdjust="spacingAndGlyphs" fill="#14142a">24 X</text>
<text x="721.0" y="168.3" textLength="22" font-family="Liberation Sans, sans-serif" font-size="11" lengthAdjust="spacingAndGlyphs" fill="#14142a">32 X</text>
<text x="721.0" y="150.3" textLength="22" font-family="Liberation Sans, sans-serif" font-size="11" lengthAdjust="spacingAndGlyphs" fill="#14142a">40 X</text>
<text x="721.0" y="132.3" textLength="22" font-family="Liberation Sans, sans-serif" font-size="11" lengthAdjust="spacingAndGlyphs" fill="#14142a">48 X</text>
<text x="722.0" y="360.5" textLength="14.6" font-family="Liberation Sans, sans-serif" font-size="11" lengthAdjust="spacingAndGlyphs" fill="#14142a">2%</text>
<text x="722.0" y="338.5" textLength="14.6" font-family="Liberation Sans, sans-serif" font-size="11" lengthAdjust="spacingAndGlyphs" fill="#14142a">4%</text>
<text x="722.0" y="315.5" textLength="14.6" font-family="Liberation Sans, sans-serif" font-size="11" lengthAdjust="spacingAndGlyphs" fill="#14142a">6%</text>
<text x="722.0" y="293.5" textLength="14.6" font-family="Liberation Sans, sans-serif" font-size="11" lengthAdjust="spacingAndGlyphs" fill="#14142a">8%</text>
<text x="722.0" y="270.5" textLength="19.7" font-family="Liberation Sans, sans-serif" font-size="11" lengthAdjust="spacingAndGlyphs" fill="#14142a">10%</text>
<text x="198.3" y="247.0" textLength="5.2" font-family="Liberation Sans, sans-serif" font-size="11" lengthAdjust="spacingAndGlyphs" fill="#14142a">0</text>
<text x="260.1" y="247.0" textLength="10.6" font-family="Liberation Sans, sans-serif" font-size="11" lengthAdjust="spacingAndGlyphs" fill="#14142a">10</text>
<text x="324.6" y="247.0" textLength="10.6" font-family="Liberation Sans, sans-serif" font-size="11" lengthAdjust="spacingAndGlyphs" fill="#14142a">20</text>
<text x="389.1" y="247.0" textLength="10.6" font-family="Liberation Sans, sans-serif" font-size="11" lengthAdjust="spacingAndGlyphs" fill="#14142a">30</text>
<text x="453.6" y="247.0" textLength="10.6" font-family="Liberation Sans, sans-serif" font-size="11" lengthAdjust="spacingAndGlyphs" fill="#14142a">40</text>
<text x="518.1" y="247.0" textLength="10.6" font-family="Liberation Sans, sans-serif" font-size="11" lengthAdjust="spacingAndGlyphs" fill="#14142a">50</text>
<text x="582.6" y="247.0" textLength="10.6" font-family="Liberation Sans, sans-serif" font-size="11" lengthAdjust="spacingAndGlyphs" fill="#14142a">60</text>
<text x="647.1" y="247.0" textLength="10.6" font-family="Liberation Sans, sans-serif" font-size="11" lengthAdjust="spacingAndGlyphs" fill="#14142a">70</text>
<text x="701.3" y="247.0" textLength="30.4" font-family="Liberation Sans, sans-serif" font-size="11" lengthAdjust="spacingAndGlyphs" fill="#14142a">80 min</text>
<text x="198.3" y="391.0" textLength="5.2" font-family="Liberation Sans, sans-serif" font-size="11" lengthAdjust="spacingAndGlyphs" fill="#14142a">0</text>
<text x="260.1" y="391.0" textLength="10.6" font-family="Liberation Sans, sans-serif" font-size="11" lengthAdjust="spacingAndGlyphs" fill="#14142a">10</text>
<text x="324.6" y="391.0" textLength="10.6" font-family="Liberation Sans, sans-serif" font-size="11" lengthAdjust="spacingAndGlyphs" fill="#14142a">20</text>
<text x="389.1" y="391.0" textLength="10.6" font-family="Liberation Sans, sans-serif" font-size="11" lengthAdjust="spacingAndGlyphs" fill="#14142a">30</text>
<text x="453.6" y="391.0" textLength="10.6" font-family="Liberation Sans, sans-serif" font-size="11" lengthAdjust="spacingAndGlyphs" fill="#14142a">40</text>
<text x="518.1" y="391.0" textLength="10.6" font-family="Liberation Sans, sans-serif" font-size="11" lengthAdjust="spacingAndGlyphs" fill="#14142a">50</text>
<text x="582.6" y="391.0" textLength="10.6" font-family="Liberation Sans, sans-serif" font-size="11" lengthAdjust="spacingAndGlyphs" fill="#14142a">60</text>
<text x="647.1" y="391.0" textLength="10.6" font-family="Liberation Sans, sans-serif" font-size="11" lengthAdjust="spacingAndGlyphs" fill="#14142a">70</text>
<text x="701.3" y="391.0" textLength="30.4" font-family="Liberation Sans, sans-serif" font-size="11" lengthAdjust="spacingAndGlyphs" fill="#14142a">80 min</text>
</svg>
<div id="status">
 <div class="t" style="left: 1px; top: 3px; letter-spacing: -1.12px; right: auto;">テスト完了</div>
 <div style="left:139px;top:4px;width:1px;height:13px;background:#aca899"></div><div style="left:140px;top:4px;width:1px;height:13px;background:#fff"></div>
 <div style="left:145px;top:4px;width:302px;height:13px;border:1px solid #686868;border-radius:3px;background:#fff"><div style="left:3px;top:2px;width:6px;height:8px;background:linear-gradient(180deg,#6ee46e,#22c822 45%,#22c822 55%,#6ee46e)"></div><div style="left:11px;top:2px;width:6px;height:8px;background:linear-gradient(180deg,#6ee46e,#22c822 45%,#22c822 55%,#6ee46e)"></div><div style="left:19px;top:2px;width:6px;height:8px;background:linear-gradient(180deg,#6ee46e,#22c822 45%,#22c822 55%,#6ee46e)"></div><div style="left:27px;top:2px;width:6px;height:8px;background:linear-gradient(180deg,#6ee46e,#22c822 45%,#22c822 55%,#6ee46e)"></div><div style="left:35px;top:2px;width:6px;height:8px;background:linear-gradient(180deg,#6ee46e,#22c822 45%,#22c822 55%,#6ee46e)"></div><div style="left:43px;top:2px;width:6px;height:8px;background:linear-gradient(180deg,#6ee46e,#22c822 45%,#22c822 55%,#6ee46e)"></div><div style="left:51px;top:2px;width:6px;height:8px;background:linear-gradient(180deg,#6ee46e,#22c822 45%,#22c822 55%,#6ee46e)"></div><div style="left:59px;top:2px;width:6px;height:8px;background:linear-gradient(180deg,#6ee46e,#22c822 45%,#22c822 55%,#6ee46e)"></div><div style="left:67px;top:2px;width:6px;height:8px;background:linear-gradient(180deg,#6ee46e,#22c822 45%,#22c822 55%,#6ee46e)"></div><div style="left:75px;top:2px;width:6px;height:8px;background:linear-gradient(180deg,#6ee46e,#22c822 45%,#22c822 55%,#6ee46e)"></div><div style="left:83px;top:2px;width:6px;height:8px;background:linear-gradient(180deg,#6ee46e,#22c822 45%,#22c822 55%,#6ee46e)"></div><div style="left:91px;top:2px;width:6px;height:8px;background:linear-gradient(180deg,#6ee46e,#22c822 45%,#22c822 55%,#6ee46e)"></div><div style="left:99px;top:2px;width:6px;height:8px;background:linear-gradient(180deg,#6ee46e,#22c822 45%,#22c822 55%,#6ee46e)"></div><div style="left:107px;top:2px;width:6px;height:8px;background:linear-gradient(180deg,#6ee46e,#22c822 45%,#22c822 55%,#6ee46e)"></div><div style="left:115px;top:2px;width:6px;height:8px;background:linear-gradient(180deg,#6ee46e,#22c822 45%,#22c822 55%,#6ee46e)"></div><div style="left:123px;top:2px;width:6px;height:8px;background:linear-gradient(180deg,#6ee46e,#22c822 45%,#22c822 55%,#6ee46e)"></div><div style="left:131px;top:2px;width:6px;height:8px;background:linear-gradient(180deg,#6ee46e,#22c822 45%,#22c822 55%,#6ee46e)"></div><div style="left:139px;top:2px;width:6px;height:8px;background:linear-gradient(180deg,#6ee46e,#22c822 45%,#22c822 55%,#6ee46e)"></div><div style="left:147px;top:2px;width:6px;height:8px;background:linear-gradient(180deg,#6ee46e,#22c822 45%,#22c822 55%,#6ee46e)"></div><div style="left:155px;top:2px;width:6px;height:8px;background:linear-gradient(180deg,#6ee46e,#22c822 45%,#22c822 55%,#6ee46e)"></div><div style="left:163px;top:2px;width:6px;height:8px;background:linear-gradient(180deg,#6ee46e,#22c822 45%,#22c822 55%,#6ee46e)"></div><div style="left:171px;top:2px;width:6px;height:8px;background:linear-gradient(180deg,#6ee46e,#22c822 45%,#22c822 55%,#6ee46e)"></div><div style="left:179px;top:2px;width:6px;height:8px;background:linear-gradient(180deg,#6ee46e,#22c822 45%,#22c822 55%,#6ee46e)"></div><div style="left:187px;top:2px;width:6px;height:8px;background:linear-gradient(180deg,#6ee46e,#22c822 45%,#22c822 55%,#6ee46e)"></div><div style="left:195px;top:2px;width:6px;height:8px;background:linear-gradient(180deg,#6ee46e,#22c822 45%,#22c822 55%,#6ee46e)"></div><div style="left:203px;top:2px;width:6px;height:8px;background:linear-gradient(180deg,#6ee46e,#22c822 45%,#22c822 55%,#6ee46e)"></div><div style="left:211px;top:2px;width:6px;height:8px;background:linear-gradient(180deg,#6ee46e,#22c822 45%,#22c822 55%,#6ee46e)"></div><div style="left:219px;top:2px;width:6px;height:8px;background:linear-gradient(180deg,#6ee46e,#22c822 45%,#22c822 55%,#6ee46e)"></div><div style="left:227px;top:2px;width:6px;height:8px;background:linear-gradient(180deg,#6ee46e,#22c822 45%,#22c822 55%,#6ee46e)"></div><div style="left:235px;top:2px;width:6px;height:8px;background:linear-gradient(180deg,#6ee46e,#22c822 45%,#22c822 55%,#6ee46e)"></div><div style="left:243px;top:2px;width:6px;height:8px;background:linear-gradient(180deg,#6ee46e,#22c822 45%,#22c822 55%,#6ee46e)"></div><div style="left:251px;top:2px;width:6px;height:8px;background:linear-gradient(180deg,#6ee46e,#22c822 45%,#22c822 55%,#6ee46e)"></div><div style="left:259px;top:2px;width:6px;height:8px;background:linear-gradient(180deg,#6ee46e,#22c822 45%,#22c822 55%,#6ee46e)"></div><div style="left:267px;top:2px;width:6px;height:8px;background:linear-gradient(180deg,#6ee46e,#22c822 45%,#22c822 55%,#6ee46e)"></div><div style="left:275px;top:2px;width:6px;height:8px;background:linear-gradient(180deg,#6ee46e,#22c822 45%,#22c822 55%,#6ee46e)"></div><div style="left:283px;top:2px;width:6px;height:8px;background:linear-gradient(180deg,#6ee46e,#22c822 45%,#22c822 55%,#6ee46e)"></div><div style="left:291px;top:2px;width:6px;height:8px;background:linear-gradient(180deg,#6ee46e,#22c822 45%,#22c822 55%,#6ee46e)"></div></div>
 <div class="t" style="left: 452.8px; top: 3px; letter-spacing: 0px; right: auto; transform-origin: 0px 50%; transform: scaleX(0.791);">100.0%</div>
 <div style="left:505px;top:4px;width:1px;height:13px;background:#aca899"></div><div style="left:506px;top:4px;width:1px;height:13px;background:#fff"></div>
 <div class="t" style="left: 600.8px; top: 3px; letter-spacing: 0px; right: auto; transform-origin: 0px 50%; transform: scaleX(0.866);">10:16</div>
 <div style="left:628px;top:4px;width:1px;height:13px;background:#aca899"></div><div style="left:629px;top:4px;width:1px;height:13px;background:#fff"></div>
 <svg style="left:736px;top:6px" width="13" height="13"><g fill="#b8b4a0"><rect x="9" y="9" width="2" height="2"></rect><rect x="5" y="9" width="2" height="2"></rect><rect x="1" y="9" width="2" height="2"></rect><rect x="9" y="5" width="2" height="2"></rect><rect x="5" y="5" width="2" height="2"></rect><rect x="9" y="1" width="2" height="2"></rect></g></svg>
</div>
</div>

</body></html>
